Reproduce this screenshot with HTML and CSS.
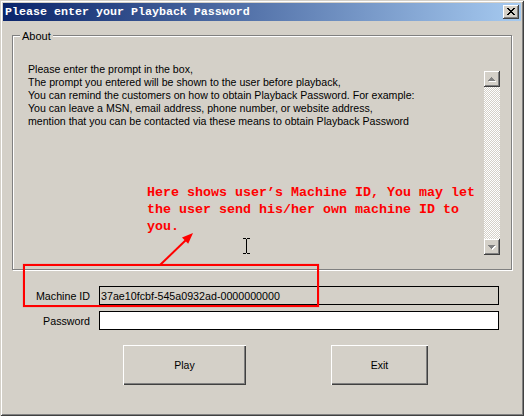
FILE: index.html
```html
<!DOCTYPE html>
<html>
<head>
<meta charset="utf-8">
<title>Please enter your Playback Password</title>
<link rel="stylesheet" href="styles.css">
</head>
<body>
<div class="window">
  <div class="titlebar">
    <span class="title">Please enter your Playback Password</span>
    <button class="close" type="button" aria-label="Close">
      <svg width="8" height="7" viewBox="0 0 8 7"><path fill="#000" d="M0 0h2v1H0zM6 0h2v1H6zM1 1h2v1H1zM5 1h2v1H5zM2 2h4v1H2zM3 3h2v1H3zM2 4h4v1H2zM1 5h2v1H1zM5 5h2v1H5zM0 6h2v1H0zM6 6h2v1H6z"/></svg>
    </button>
  </div>

  <div class="group">
    <span class="legend">About</span>
    <div class="memo">
      <p class="memo-text">Please enter the prompt in the box,<br>The prompt you entered will be shown to the user before playback,<br>You can remind the customers on how to obtain Playback Password. For example:<br>You can leave a MSN, email address, phone number, or website address,<br>mention that you can be contacted via these means to obtain Playback Password</p>
      <div class="vscroll">
        <div class="sb-btn">
          <svg width="8" height="5" viewBox="0 0 8 5"><path fill="#fff" d="M4 1h1v1h1v1h1v1h1v1H1V4h1V3h1V2h1z"/><path fill="#808080" d="M3 0h1v1h1v1h1v1h1v1H0V3h1V2h1V1h1z"/></svg>
        </div>
        <div class="sb-track"></div>
        <div class="sb-btn">
          <svg width="8" height="5" viewBox="0 0 8 5"><path fill="#fff" d="M1 1h7v1H7v1H6v1H5v1H4V4H3V3H2V2H1z"/><path fill="#808080" d="M0 0h7v1H6v1H5v1H4v1H3V3H2V2H1V1H0z"/></svg>
        </div>
      </div>
    </div>
  </div>

  <div class="form">
    <div class="row">
      <label class="lbl" for="mid">Machine ID</label>
      <input class="field ro" id="mid" type="text" value="37ae10fcbf-545a0932ad-0000000000" readonly>
    </div>
    <div class="row">
      <label class="lbl" for="pwd">Password</label>
      <input class="field" id="pwd" type="password">
    </div>
  </div>

  <div class="buttons">
    <button class="btn play" type="button">Play</button>
    <button class="btn exit" type="button">Exit</button>
  </div>

  <div class="note">Here shows user’s Machine ID, You may let
the user send his/her own machine ID to
you.</div>
  <svg class="arrow" width="50" height="45" viewBox="0 0 50 45">
    <line x1="10" y1="40" x2="37" y2="14" stroke="#f00" stroke-width="2"/>
    <polygon fill="#f00" points="43,8 38.2,18.8 32.0,12.5"/>
  </svg>
  <div class="redbox"></div>
  <svg class="ibeam" width="8" height="16" viewBox="0 0 8 16">
    <path stroke="#000" stroke-width="1" fill="none" d="M0 0.5H3M4 0.5H7M3.5 1V15M0 15.5H3M4 15.5H7"/>
  </svg>
</div>
</body>
</html>
```

FILE: styles.css
```css
* {
  box-sizing: border-box;
}

html,
body {
  margin: 0;
  padding: 0;
  background: #d4d0c8;
}

body {
  width: 524px;
  height: 416px;
  overflow: hidden;
  font-family: "Liberation Sans", Arial, sans-serif;
  font-size: 11px;
  color: #000;
}

.window {
  position: relative;
  width: 524px;
  height: 416px;
  padding: 3px;
  background: #d4d0c8;
  box-shadow: inset 1px 1px 0 #d4d0c8, inset -1px -1px 0 #404040,
    inset 2px 2px 0 #fff, inset -2px -2px 0 #808080;
  display: flex;
  flex-direction: column;
}

/* title bar */
.titlebar {
  height: 18px;
  display: flex;
  align-items: flex-start;
  padding-left: 2px;
  background: linear-gradient(to right, #0a246a, #a6caf0);
}

.title {
  flex: 1;
  padding-top: 1px;
  font-family: "Liberation Mono", "DejaVu Sans Mono", monospace;
  font-weight: bold;
  font-size: 11.67px;
  line-height: 17px;
  color: #fff;
  white-space: nowrap;
}

.close {
  width: 16px;
  height: 14px;
  margin: 2px 2px 0 0;
  padding: 3px 0 0 4px;
  border: 0;
  background: #d4d0c8;
  box-shadow: inset -1px -1px 0 #404040, inset 1px 1px 0 #fff,
    inset -2px -2px 0 #808080;
  display: flex;
  align-items: flex-start;
  justify-content: flex-start;
}

.close svg {
  display: block;
}

/* group box */
.group {
  position: relative;
  margin: 14px 0 0 9px;
  width: 500px;
  height: 235px;
  border: 1px solid #808080;
  box-shadow: 1px 1px 0 #fff, inset 1px 1px 0 #fff;
  padding: 27px 11px 14px 15px;
  display: flex;
}

.legend {
  position: absolute;
  top: -7px;
  left: 7px;
  padding: 0 2px;
  background: #d4d0c8;
  font-size: 11px;
  line-height: 14px;
}

.memo {
  flex: 1;
  display: flex;
}

.memo-text {
  flex: 1;
  margin: 0;
  font-size: 10.6px;
  line-height: 13px;
  white-space: nowrap;
}

.vscroll {
  width: 16px;
  height: 184px;
  margin-top: 8px;
  display: flex;
  flex-direction: column;
}

.sb-btn {
  width: 16px;
  height: 16px;
  background: #d4d0c8;
  box-shadow: inset -1px -1px 0 #404040, inset 1px 1px 0 #fff,
    inset -2px -2px 0 #808080;
  display: flex;
  align-items: center;
  justify-content: center;
}

.sb-btn svg {
  display: block;
}

.sb-track {
  flex: 1;
  background: repeating-conic-gradient(#fff 0 25%, #d4d0c8 0 50%) 0 0 / 2px 2px;
}

/* form */
.form {
  margin-top: 16px;
  display: flex;
  flex-direction: column;
  gap: 6px;
}

.row {
  height: 19px;
  display: flex;
  align-items: center;
  gap: 9px;
}

.lbl {
  width: 87px;
  text-align: right;
  font-size: 10.7px;
}

.field {
  width: 400px;
  height: 19px;
  margin: 0;
  padding: 0 1px;
  border: 1px solid #000;
  border-radius: 0;
  background: #fff;
  outline: none;
  font-family: "Liberation Sans", Arial, sans-serif;
  font-size: 10.7px;
  color: #000;
}

.field.ro {
  background: #d4d0c8;
}

/* buttons */
.buttons {
  margin-top: 15px;
  padding-left: 120px;
  display: flex;
  gap: 85px;
}

.btn {
  height: 40px;
  padding: 0;
  border: 0;
  background: #d4d0c8;
  box-shadow: inset 1px 1px 0 #fff, inset -1px -1px 0 #404040,
    inset -2px -2px 0 #808080;
  font-family: "Liberation Sans", Arial, sans-serif;
  font-size: 10.5px;
  color: #000;
}

.play {
  width: 123px;
}

.exit {
  width: 97px;
}

/* annotations drawn over the dialog */
.note {
  position: absolute;
  left: 147px;
  top: 184px;
  font-family: "Liberation Mono", "DejaVu Sans Mono", monospace;
  font-weight: bold;
  font-size: 13.33px;
  line-height: 17px;
  color: #f00;
  white-space: pre;
}

.arrow {
  position: absolute;
  left: 150px;
  top: 225px;
}

.redbox {
  position: absolute;
  left: 23px;
  top: 264px;
  width: 296px;
  height: 43px;
  border: 2px solid #f00;
  box-shadow: 0 0 1px rgba(255, 0, 0, 0.5);
}

.ibeam {
  position: absolute;
  left: 243px;
  top: 238px;
}
```
